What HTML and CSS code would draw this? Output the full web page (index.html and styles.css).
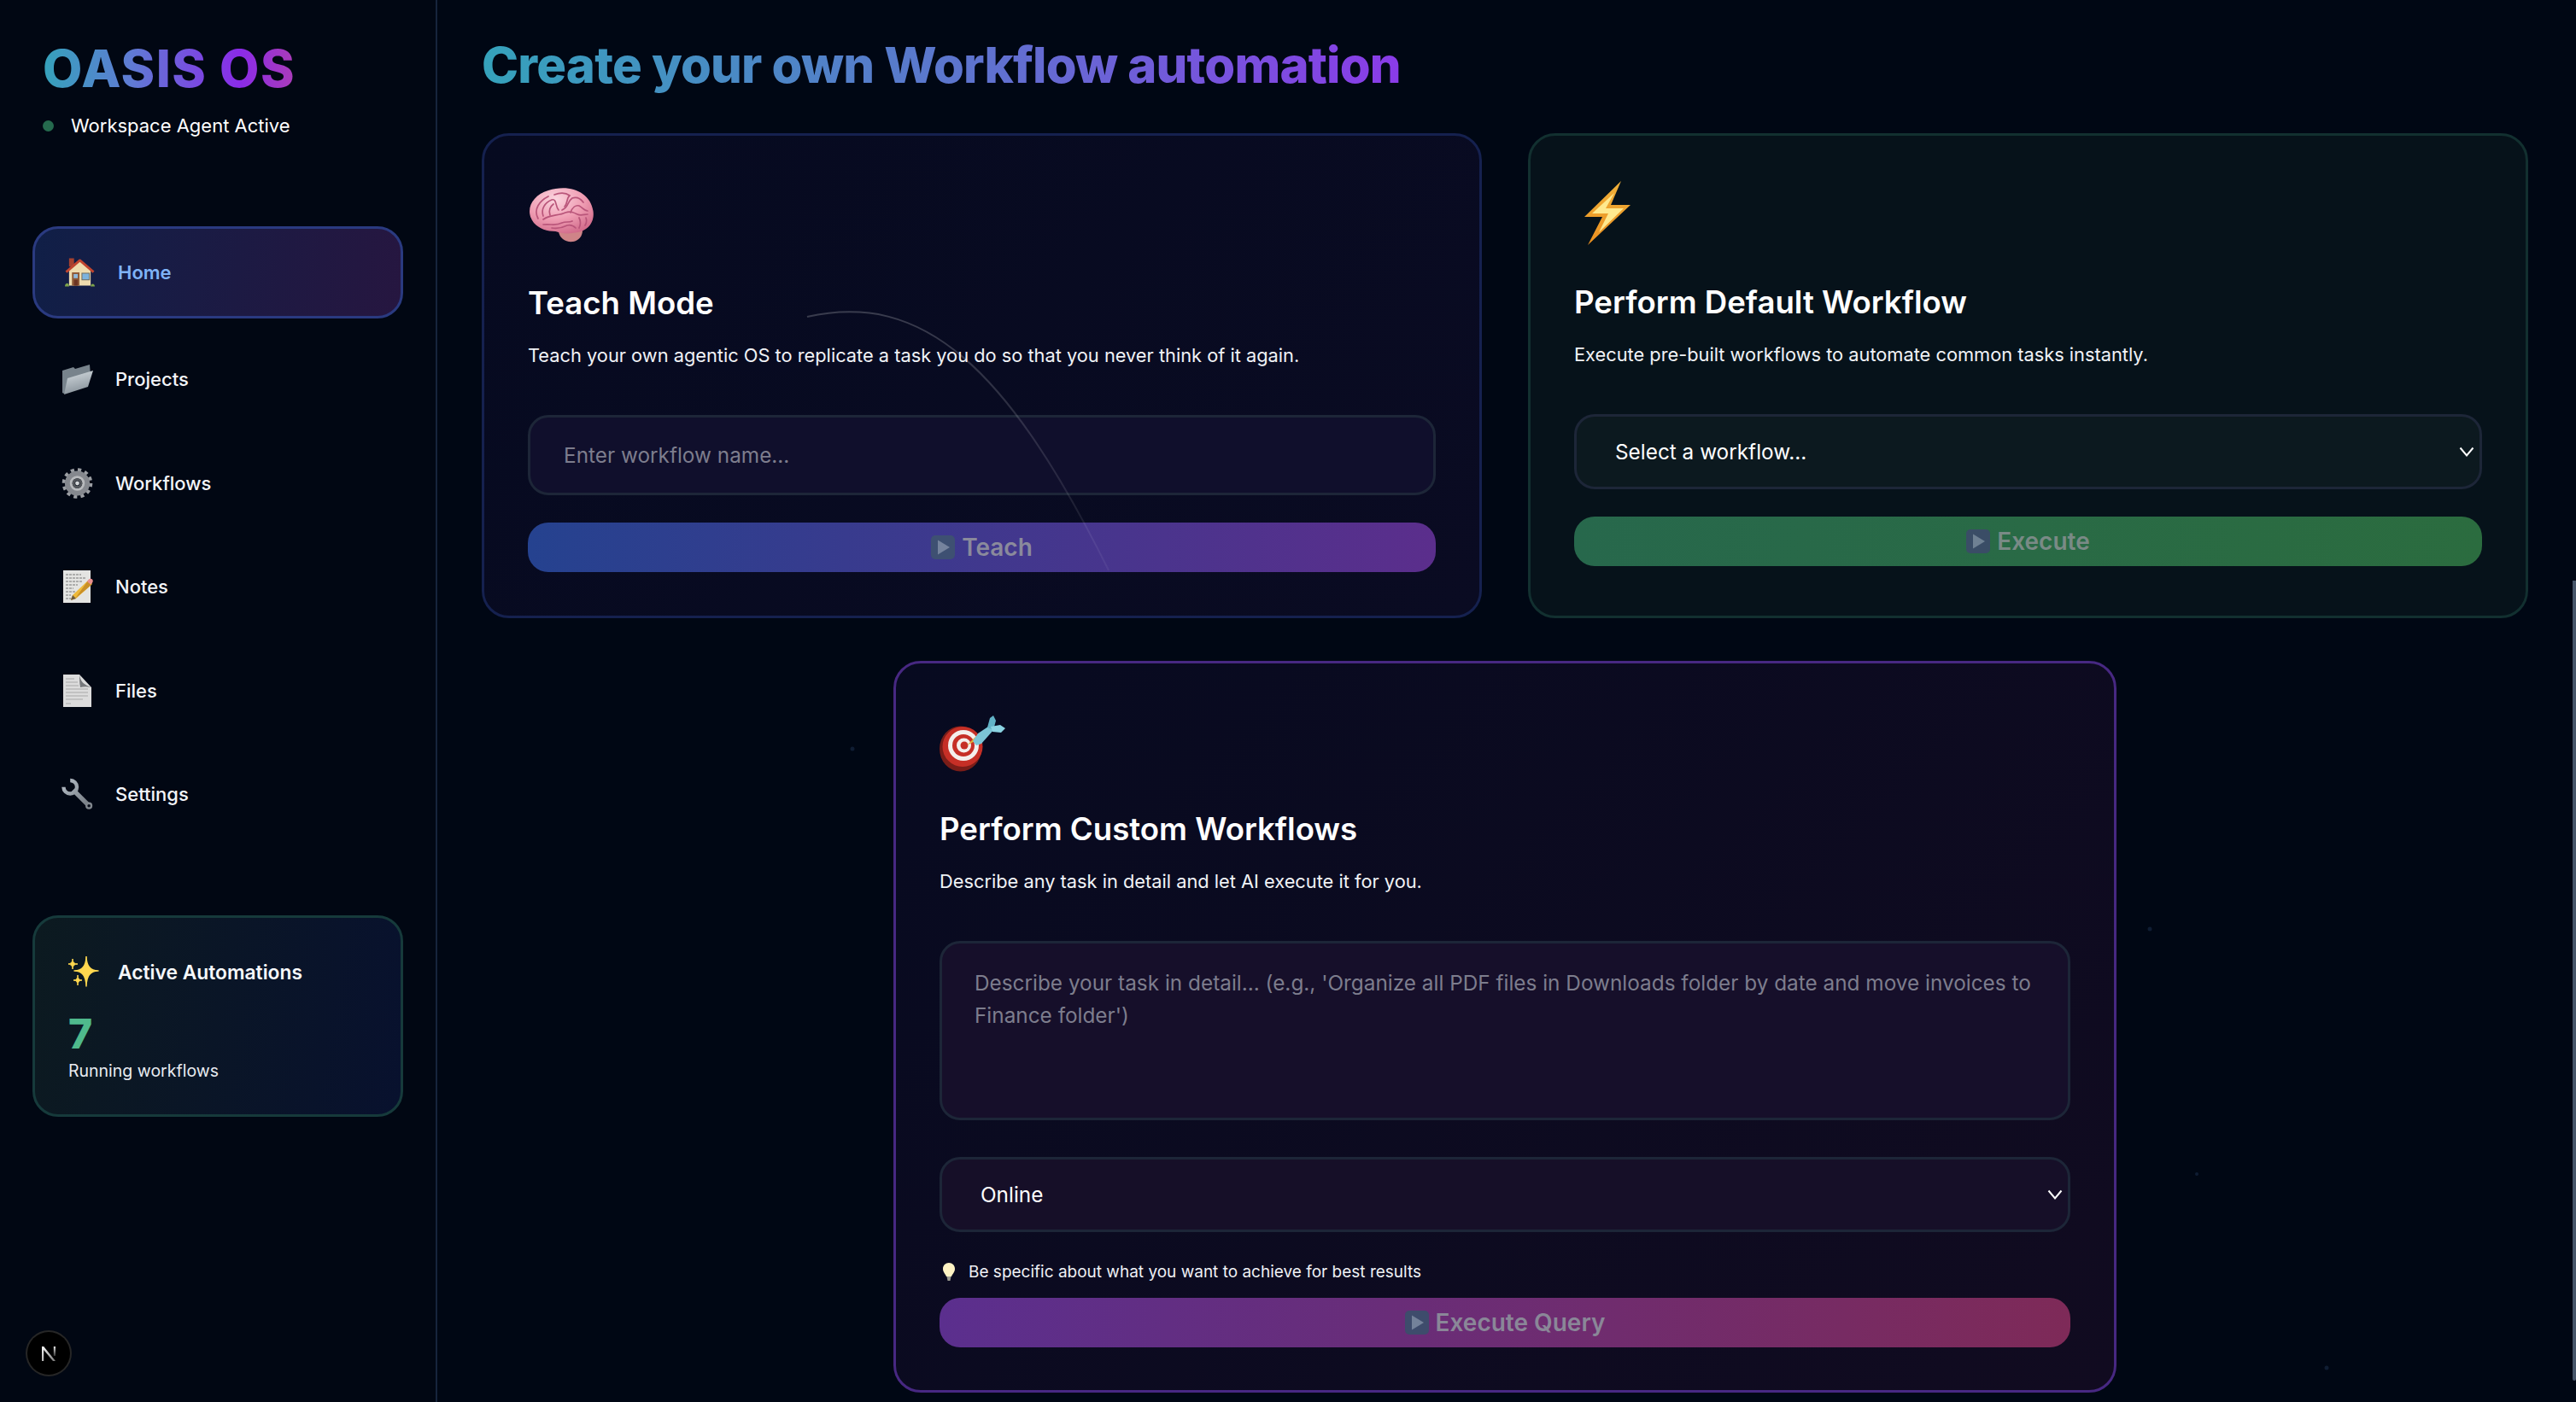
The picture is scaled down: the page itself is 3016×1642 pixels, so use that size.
FILE: index.html
```html
<!DOCTYPE html>
<html lang="en">
<head>
<meta charset="utf-8">
<title>OASIS OS</title>
<link rel="stylesheet" href="styles.css">
</head>
<body>
<div class="app">
  <aside class="sidebar">
    <div class="brand">
      <h1 class="logo">OASIS OS</h1>
      <div class="status"><span class="dot"></span><span>Workspace Agent Active</span></div>
    </div>
    <nav class="nav">
      <a class="nav-item active">
        <svg class="nav-icon home-icon" viewBox="0 0 36 36"><rect x="5" y="1" width="6" height="10" fill="#a5412f"/><path d="M5 15 18 4l13 11v19H5z" fill="#efdcae"/><path d="M1.500 17.500 18 3.500l16.500 14" fill="none" stroke="#c0452f" stroke-width="3" stroke-linejoin="round"/><rect x="8.500" y="18" width="9" height="16" fill="#8f5a37"/><rect x="10.500" y="20" width="5" height="5" fill="#8fb9dc"/><rect x="11" y="27" width="4.500" height="7" fill="#6d3522"/><rect x="20" y="18.500" width="10" height="9" fill="#6f6a5c"/><rect x="21" y="19.500" width="8" height="7" fill="#7db3dd"/><path d="M0 35c0-5 5-5 5-1v1zM31 35c0-4 5-4 5 0z" fill="#7ca24a"/></svg>
        <span>Home</span>
      </a>
      <a class="nav-item">
        <svg class="nav-icon" viewBox="0 0 37 36"><defs><linearGradient id="fd" x1="0" y1="0" x2="0.3" y2="1"><stop offset="0" stop-color="#d6dde2"/><stop offset="1" stop-color="#8a949c"/></linearGradient></defs><path d="M1 8 14 4l2 2 17-5 1 12L3 35 1 34z" fill="#78838c"/><path d="M7 17 37 8l-6 19L3 36z" fill="url(#fd)"/></svg>
        <span>Projects</span>
      </a>
      <a class="nav-item">
        <svg class="nav-icon" viewBox="0 0 38 38"><circle cx="19" cy="19" r="16.300" fill="none" stroke="#9b9ea3" stroke-width="4" stroke-dasharray="4.270 4.270"/><circle cx="19" cy="19" r="11" fill="none" stroke="#85888e" stroke-width="8"/><circle cx="19" cy="19" r="7.500" fill="none" stroke="#b8babd" stroke-width="3"/><circle cx="19" cy="19" r="4.500" fill="none" stroke="#54575c" stroke-width="3"/><circle cx="19" cy="19" r="2.500" fill="#d4d6d8"/></svg>
        <span>Workflows</span>
      </a>
      <a class="nav-item">
        <svg class="nav-icon" viewBox="0 0 37 38"><rect x="2" y="0" width="32" height="38" fill="#e4e4e2"/><path d="M5 5h18M5 9h24M5 13h20M5 17h14M5 21h9M5 25h12M5 29h6M5 33h10" stroke="#777" stroke-width="1.200" stroke-dasharray="3 1"/><path d="M32 11 36 16 17 33l-6 2 2-6z" fill="#eeb93a"/><path d="M31 12 35 17 16 33z" fill="#c98f27"/><path d="M30 13 32 10.500c1-1 3-1 4 0s1 3 0 4l-2 2z" fill="#ea8f8f"/><path d="M13 29l-2 6 6-2z" fill="#6b5a42"/></svg>
        <span>Notes</span>
      </a>
      <a class="nav-item">
        <svg class="nav-icon" viewBox="0 0 37 38"><path d="M2 0h19l14 15v23H2z" fill="#dcdcdc"/><path d="M21 0c1 8 5 12 14 15-5-1-9-1-13 0-1-5-1-10-1-15z" fill="#77797c"/><path d="M5 5h10M5 9h14M5 13h15M5 17h26M5 21h26M5 25h26M5 29h20M5 34h6" stroke="#b9b9b9" stroke-width="1.300"/></svg>
        <span>Files</span>
      </a>
      <a class="nav-item">
        <svg class="nav-icon" viewBox="0 0 38 38"><defs><linearGradient id="wr" gradientUnits="userSpaceOnUse" x1="2" y1="2" x2="36" y2="36"><stop offset="0" stop-color="#b3bcc5"/><stop offset="1" stop-color="#6e747b"/></linearGradient></defs><path d="M10.500 2.500A8 8 0 1 1 2.500 10.500" fill="none" stroke="url(#wr)" stroke-width="4.500"/><path d="M14 14 32 32" stroke="url(#wr)" stroke-width="5.500"/><circle cx="33" cy="33" r="4.200" fill="#80868d"/><circle cx="33" cy="33" r="1.800" fill="#0a0f1c"/></svg>
        <span>Settings</span>
      </a>
    </nav>
    <section class="automations">
      <div class="auto-head">
        <svg class="auto-icon" viewBox="0 0 36 36"><path d="M21 0Q21 17 35 17 21 17 21 35 21 17 7 17 21 17 21 0z" fill="#ffd84f" stroke="#ffd84f" stroke-width="1.500" stroke-linejoin="round"/><path d="M5 3Q5 9 11 9 5 9 5 15 5 9-1 9 5 9 5 3z" fill="#ffd84f" stroke="#ffd84f"/><path d="M11 22Q11 28 16 28 11 28 11 34 11 28 6 28 11 28 11 22z" fill="#ffd84f" stroke="#ffd84f"/></svg>
        <span>Active Automations</span>
      </div>
      <div class="auto-count">7</div>
      <div class="auto-label">Running workflows</div>
    </section>
  </aside>

  <main class="main">
    <h2 class="page-title">Create your own Workflow automation</h2>
    <div class="top-grid">
      <section class="card card-teach">
        <svg class="card-icon" width="77" height="65" viewBox="0 0 77 65"><defs><radialGradient id="br" cx="0.4" cy="0.25" r="0.8"><stop offset="0" stop-color="#fbd5df"/><stop offset="0.55" stop-color="#ef9db3"/><stop offset="1" stop-color="#d16a8a"/></radialGradient></defs><path d="M36 52c1 8 8 13 17 12 6-1 11-6 11-13z" fill="#cf8488"/><path d="M7 42C-4 28 4 10 24 4 48-4 73 5 76.500 28c2 13-6 23-18 25-10 2-18 2-26-1-10 0-19-3-25.500-10z" fill="url(#br)"/><g fill="none" stroke="#b9557a" stroke-width="1.700" stroke-linecap="round"><path d="M12 37C6 26 14 16 24 11"/><path d="M18 34c-3-8 2-16 10-19 6-2 4 8 8 12"/><path d="M26 33c-2-6 0-10 4-13"/><path d="M31 9c8-3 14-2 18 1-4 3-2 9-6 13"/><path d="M40 27c8-3 6-10 12-14 6-2 10 1 13 5"/><path d="M50 30c2-6 6-9 10-8 4 2 6 6 10 6"/><path d="M18 38c8-6 18-4 26-8 6-2 10 0 14 2 4 2 8 0 12 0"/><path d="M18 44c10-1 14 2 22-2 4-2 8 0 12-2"/><path d="M28 48c6 1 12 0 18-3 4-1 8 1 10 3"/><path d="M60 36c2 4 2 8 0 12"/><path d="M68 36c1 3 1 6-1 9"/></g></svg>
        <h3 class="card-title">Teach Mode</h3>
        <p class="card-desc">Teach your own agentic OS to replicate a task you do so that you never think of it again.</p>
        <input class="field input-teach" type="text" placeholder="Enter workflow name...">
        <button class="run btn-teach" type="button">
          <svg class="play" viewBox="0 0 28 28"><rect width="28" height="28" rx="5" fill="#3e5072"/><path d="M8 5.500 22 14 8 22.500z" fill="#75839d"/></svg>
          <span>Teach</span>
        </button>
      </section>

      <section class="card card-default">
        <svg class="card-icon bolt" width="54" height="75" viewBox="0 0 54 75"><defs><linearGradient id="bo" x1="0" y1="0" x2="0" y2="1"><stop offset="0" stop-color="#f0b13a"/><stop offset="1" stop-color="#ea8f20"/></linearGradient></defs><path d="M43 0 0 42h21L4 75l50-47H31z" fill="url(#bo)"/><path d="M35 14 9 38h19L17 60l29-28H25z" fill="#ffe98e"/></svg>
        <h3 class="card-title">Perform Default Workflow</h3>
        <p class="card-desc">Execute pre-built workflows to automate common tasks instantly.</p>
        <div class="select-wrap">
          <select class="field select-default"><option>Select a workflow...</option></select>
          <svg class="chevron" viewBox="0 0 18 14"><path d="M1.500 2.500 9 11.500l7.500-9" fill="none" stroke="#fff" stroke-width="2"/></svg>
        </div>
        <button class="run btn-default" type="button">
          <svg class="play" viewBox="0 0 28 28"><rect width="28" height="28" rx="5" fill="#3a4d66"/><path d="M8 5.500 22 14 8 22.500z" fill="#6f8193"/></svg>
          <span>Execute</span>
        </button>
      </section>
    </div>

    <section class="card card-custom">
      <svg class="card-icon" width="77" height="66" viewBox="0 0 77 66"><ellipse cx="24.500" cy="39" rx="24.500" ry="26.500" fill="#7a1d18"/><circle cx="27" cy="36.500" r="23.500" fill="#c62f26"/><circle cx="28" cy="35" r="18" fill="#f4efec"/><circle cx="28" cy="35" r="13" fill="#c62f26"/><circle cx="28.500" cy="35" r="8.500" fill="#f4efec"/><circle cx="29" cy="35" r="4.500" fill="#c62f26"/><path d="M32 35 42 25l3 3z" fill="#e2b033"/><path d="M39 30 45 21 60 11 64 16 49 33 43 35z" fill="#7cc5d6"/><path d="M56 14 59 3 63 0 66 6 63 17z" fill="#62b3c7"/><path d="M60 13 71 11 77 15 72 20 62 19z" fill="#8bd3e2"/></svg>
      <h3 class="card-title">Perform Custom Workflows</h3>
      <p class="card-desc">Describe any task in detail and let AI execute it for you.</p>
      <textarea class="field text-custom" placeholder="Describe your task in detail... (e.g., 'Organize all PDF files in Downloads folder by date and move invoices to Finance folder')"></textarea>
      <div class="select-wrap">
        <select class="field select-custom"><option>Online</option></select>
        <svg class="chevron" viewBox="0 0 18 14"><path d="M1.500 2.500 9 11.500l7.500-9" fill="none" stroke="#fff" stroke-width="2"/></svg>
      </div>
      <p class="hint">
        <svg class="bulb" viewBox="0 0 14 22"><path d="M7 0c4 0 7 3 7 7s-3 6-4 9H4C3 13 0 11 0 7s3-7 7-7z" fill="#fff3c4"/><path d="M4.500 16h5l-1 5h-3z" fill="#9b9a90"/></svg>
        <span>Be specific about what you want to achieve for best results</span>
      </p>
      <button class="run btn-custom" type="button">
        <svg class="play" viewBox="0 0 28 28"><rect width="28" height="28" rx="5" fill="#3e4c6c"/><path d="M8 5.500 22 14 8 22.500z" fill="#74829a"/></svg>
        <span>Execute Query</span>
      </button>
    </section>
  </main>
</div>

<svg class="overlay" viewBox="0 0 3016 1642" aria-hidden="true">
  <defs><linearGradient id="arc" gradientUnits="userSpaceOnUse" x1="0" y1="370" x2="0" y2="668"><stop offset="0" stop-color="#fff" stop-opacity=".2"/><stop offset="1" stop-color="#fff" stop-opacity=".05"/></linearGradient></defs>
  <path d="M945 371C1080 340 1180 430 1298 668" fill="none" stroke="url(#arc)" stroke-width="2"/>
  <g fill="#0f1d33"><circle cx="998" cy="877" r="2.500"/><circle cx="2517" cy="1088" r="2.500"/><circle cx="2572" cy="1375" r="2"/><circle cx="2724" cy="1602" r="2.500"/></g>
</svg>
<a class="next-badge"><svg viewBox="0 0 50 50" width="50" height="50"><defs><linearGradient id="nx" gradientUnits="userSpaceOnUse" x1="17" y1="17" x2="33" y2="34"><stop offset="0" stop-color="#fff"/><stop offset="1" stop-color="#777"/></linearGradient><linearGradient id="nr" x1="0" y1="0" x2="0" y2="1"><stop offset="0" stop-color="#e6e6e6"/><stop offset="1" stop-color="#333"/></linearGradient></defs><path d="M17 34V17h2.200L33 34h-3L19.200 21v13z" fill="url(#nx)"/><rect x="30.800" y="17" width="2.200" height="11" fill="url(#nr)"/></svg></a>
<div class="scroll-thumb"></div>
</body>
</html>
```

FILE: styles.css
```css
* { box-sizing: border-box; }
html, body { margin: 0; height: 100%; overflow: hidden; }
body { background: #000714; color: #fff; font-family: Inter, "Noto Sans", sans-serif; }
h1, h2, h3, p { margin: 0; }

.app { display: flex; height: 1642px; }

.sidebar { width: 512px; flex: none; border-right: 2px solid #16243c; background: #010713; padding: 44px 38px 0; }
.brand { padding-left: 12px; }
.logo { font-size: 60px; line-height: 72px; font-weight: 800; letter-spacing: 1.500px; display: inline-block;
  background: linear-gradient(90deg, #35a2bb 0%, #5f7bd4 35%, #8a2be8 78%, #ab3cb8 100%);
  -webkit-background-clip: text; background-clip: text; color: transparent; }
.status { display: flex; align-items: center; gap: 20px; font-size: 22px; line-height: 30px; margin-top: 16px; }
.dot { width: 13px; height: 13px; border-radius: 50%; background: #256a4e; }

.nav { margin-top: 103px; }
.nav-item { display: flex; align-items: center; gap: 26px; height: 108px; margin-bottom: 13.500px; padding-left: 34px; font-size: 22px; font-weight: 500; color: #f3f5f9; }
.nav-icon { width: 37px; height: 38px; flex: none; }
.nav-item.active { border: 3px solid #2a3a80; border-radius: 30px; background: linear-gradient(100deg, #101f47, #261640); color: #7fb3f6; padding-left: 35px; gap: 27px; margin-bottom: 17px; font-weight: 600; }
.home-icon { width: 35px; height: 36px; }

.automations { margin-top: 88px; height: 236px; border: 3px solid #163a3b; border-radius: 30px; background: linear-gradient(100deg, #0c1a20, #08112e); padding: 45px 0 0 39px; }
.auto-head { display: flex; align-items: center; gap: 22px; font-size: 22.800px; font-weight: 600; color: #f6f8fb; }
.auto-icon { width: 36px; height: 36px; flex: none; }
.auto-count { font-size: 48px; line-height: 56px; font-weight: 800; color: #4fb98c; margin-top: 27px; }
.auto-label { font-size: 19.500px; line-height: 26px; color: #e8ebf0; margin-top: 2px; }

.main { flex: 1; padding: 40px 56px 0 52px; background: #000714; }
.page-title { font-size: 58px; line-height: 72px; font-weight: 800; display: inline-block; letter-spacing: -0.800px;
  background: linear-gradient(90deg, #35a2bb 0%, #5f72cf 55%, #8a3be8 100%);
  -webkit-background-clip: text; background-clip: text; color: transparent; }

.top-grid { display: grid; grid-template-columns: 1171px 1171px; gap: 54px; margin-top: 44px; }
.card { display: flex; flex-direction: column; align-items: flex-start; border: 3px solid; border-radius: 32px; padding: 0 51px; }
.card-teach { height: 568px; padding-top: 60px; border-color: #15214f; background: linear-gradient(135deg, #060a20, #0a0b22); }
.card-default { height: 568px; padding-top: 53px; border-color: #123030; background: #06121a; }
.card-custom { width: 1432px; height: 857px; margin: 50px 0 0 482px; padding-top: 61px; border-color: #472882; background: linear-gradient(135deg, #070a20, #110b20); }

.card-icon { display: block; flex: none; }
.card-title { font-size: 36.600px; line-height: 48px; font-weight: 600; margin-top: 47px; color: #fff; }
.bolt { margin-left: 12px; }
.bolt + .card-title { margin-top: 43px; }
.card-custom .card-title { margin-top: 43px; }
.card-desc { font-size: 21.800px; line-height: 30px; margin-top: 22px; color: #f0f2f6; }

.field { display: block; width: 100%; border: 3px solid #1d2638; border-radius: 24px; color: #fff; font-family: inherit; font-size: 24.350px; outline: none; }
.field::placeholder { color: #7d7d8d; opacity: 1; }
.input-teach { height: 94px; margin-top: 55px; padding: 0 39px; background: #100f2c; }
.select-wrap { position: relative; width: 100%; }
.card-default .select-wrap { margin-top: 55px; }
.select-default { height: 88px; padding: 0 45px; appearance: none; background: #0c191f; }
.card-custom .select-wrap { margin-top: 43px; }
.select-custom { height: 88px; padding: 0 45px; appearance: none; background: #160f28; }
.chevron { position: absolute; right: 9px; top: 37px; width: 18px; height: 14px; }
.text-custom { height: 210px; margin-top: 55px; padding: 27px 38px; line-height: 38px; resize: none; background: #160f2a; }

.run { display: flex; align-items: center; justify-content: center; gap: 8px; width: 100%; height: 58px; border: 0; border-radius: 24px; font-family: inherit; font-size: 28px; font-weight: 600; color: #8a8a9c; }
.play { width: 28px; height: 28px; flex: none; }
.btn-teach { margin-top: 32px; background: linear-gradient(90deg, #25428f, #5b2e8c); }
.btn-default { margin-top: 32px; background: linear-gradient(90deg, #27684c, #2b6c3f); color: #7a8a86; }
.btn-custom { margin-top: 0; background: linear-gradient(90deg, #5b2f8e, #7e2a58); color: #8a8798; }

.hint { display: flex; align-items: center; gap: 16px; width: 100%; padding-left: 4px; font-size: 19px; line-height: 26px; margin: 34px 0 17px; color: #eef0f4; }
.bulb { width: 14px; height: 22px; flex: none; }

.overlay { position: absolute; left: 0; top: 0; width: 3016px; height: 1642px; pointer-events: none; }
.next-badge { position: absolute; left: 32px; top: 1560px; width: 50px; height: 50px; border-radius: 50%; background: #000; box-shadow: 0 0 0 2px #262626; }
.next-badge svg { display: block; }
.scroll-thumb { position: absolute; right: 0; top: 680px; width: 4px; height: 937px; border-radius: 0 0 2px 2px; background: #47566a; }
```
